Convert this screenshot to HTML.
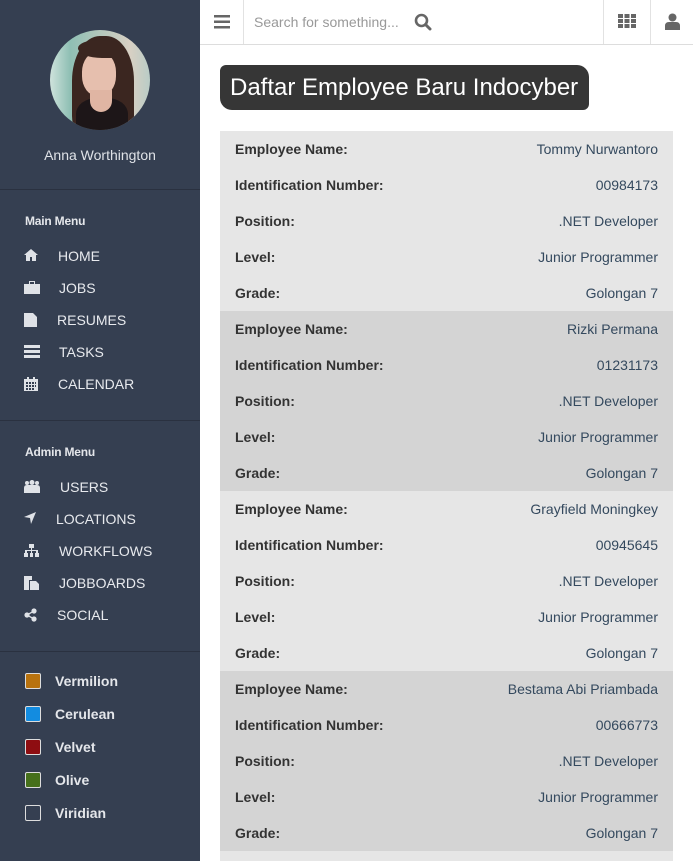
<!DOCTYPE html>
<html><head><meta charset="utf-8"><style>
*{margin:0;padding:0;box-sizing:border-box}
html{width:693px;height:861px;overflow:hidden}
body{width:693px;height:861px;overflow:hidden;font-family:"Liberation Sans",Arial,sans-serif;background:#fff;position:relative}
.sb{position:absolute;left:0;top:0;width:200px;height:861px;background:#353f51;color:#e4e6ea}
.av{position:absolute;left:50px;top:30px;width:100px;height:100px;border-radius:50%;overflow:hidden;background:linear-gradient(90deg,#cfe3dc 0%,#8fbfb4 20%,#d8d0c4 80%,#b9ccc6 100%)}
.name{position:absolute;top:147px;width:200px;text-align:center;font-size:14px;color:#dfe2e7}
.hr{position:absolute;left:0;width:200px;height:1px;background:#2a3140}
.sec{position:absolute;left:25px;font-size:12px;font-weight:bold;color:#e4e6ea;letter-spacing:-.2px}
.mi{position:absolute;left:24px;font-size:14px;color:#e8eaee;height:20px;line-height:20px}
.mi svg{position:absolute;left:0;top:3px;fill:#dfe2e7}
.mi span{position:absolute;white-space:nowrap}
.cl{position:absolute;left:25px;font-size:14px;font-weight:bold;color:#e4e6ea}
.cl i{position:absolute;left:0;top:0;width:16px;height:16px;border:1px solid #ddd;border-radius:2px}
.cl span{position:absolute;left:30px;top:0;white-space:nowrap}
.top{position:absolute;left:200px;top:0;width:493px;height:45px;border-bottom:1px solid #ddd;background:#fff}
.vl{position:absolute;top:0;width:1px;height:44px;background:#e2e2e2}
.title{position:absolute;left:220px;top:65px;width:369px;height:45px;background:#363636;color:#fff;font-size:24px;line-height:45px;padding-left:10px;border-radius:6px 12px 6px 12px;white-space:nowrap}
.blk{position:absolute;left:220px;width:453px;height:180px}
.row{height:36px;line-height:36px;font-size:14px;position:relative;padding:0 15px}
.row b{color:#333}
.row span{position:absolute;right:15px;top:0;color:#34495e}
</style></head><body>
<div class="sb">
 <div class="av">
  <div style="position:absolute;left:22px;top:6px;width:62px;height:100px;background:#3b2620;border-radius:45% 45% 20% 20%"></div>
  <div style="position:absolute;left:32px;top:22px;width:34px;height:44px;background:#e6bfae;border-radius:45%"></div>
  <div style="position:absolute;left:28px;top:10px;width:44px;height:18px;background:#3b2620;border-radius:50% 50% 20% 60%"></div>
  <div style="position:absolute;left:26px;top:68px;width:52px;height:40px;background:#1d1618;border-radius:40% 40% 0 0"></div>
  <div style="position:absolute;left:40px;top:60px;width:22px;height:22px;background:#e0b5a3;border-radius:0 0 50% 50%"></div>
 </div>
 <div class="name">Anna Worthington</div>
 <div class="hr" style="top:189px"></div>
 <div class="sec" style="top:214px">Main Menu</div>
 <div class="mi" style="top:246px"><svg width="14" height="12" viewBox="0 0 14 12"><path d="M7 0L0 6h2v6h4V8h2v4h4V6h2z"/></svg><span style="left:34px">HOME</span></div>
 <div class="mi" style="top:278px"><svg width="16" height="13" viewBox="0 0 16 13"><path d="M5 0h6v3h5v10H0V3h5zM6 1v2h4V1zM0 7h16v1H0z"/></svg><span style="left:35px">JOBS</span></div>
 <div class="mi" style="top:310px"><svg width="13" height="14" viewBox="0 0 13 14"><path d="M0 0h9l4 4v10H0zM3 7h7v1H3zm0 2h7v1H3zm0 2h7v1H3z"/></svg><span style="left:33px">RESUMES</span></div>
 <div class="mi" style="top:342px"><svg width="16" height="13" viewBox="0 0 16 13"><path d="M0 0h16v3H0zm0 5h16v3H0zm0 5h16v3H0z"/></svg><span style="left:35px">TASKS</span></div>
 <div class="mi" style="top:374px"><svg width="14" height="14" viewBox="0 0 14 14"><path d="M0 2h14v12H0zM3 0h2v3H3zm6 0h2v3H9zM2 5v2h2V5zm3 0v2h2V5zm3 0v2h2V5zm3 0v2h1V5zM2 8v2h2V8zm3 0v2h2V8zm3 0v2h2V8zm3 0v2h1V8zM2 11v2h2v-2zm3 0v2h2v-2zm3 0v2h2v-2z"/></svg><span style="left:34px">CALENDAR</span></div>
 <div class="hr" style="top:420px"></div>
 <div class="sec" style="top:445px">Admin Menu</div>
 <div class="mi" style="top:477px"><svg width="16" height="13" viewBox="0 0 16 13"><circle cx="3" cy="3" r="2"/><circle cx="8" cy="2.5" r="2.5"/><circle cx="13" cy="3" r="2"/><path d="M0 8q0-3 3-3 5 0 10 0 3 0 3 3v5H0z"/></svg><span style="left:36px">USERS</span></div>
 <div class="mi" style="top:509px"><svg width="12" height="12" viewBox="0 0 12 12"><path d="M12 0L0 5l6 1 1 6z"/></svg><span style="left:32px">LOCATIONS</span></div>
 <div class="mi" style="top:541px"><svg width="15" height="13" viewBox="0 0 15 13"><path d="M5 0h5v4H8v2h6v3h1v4h-4V9h1V7H8v2h1v4H6V9h1V7H3v2h1v4H0V9h1V6h6V4H5z"/></svg><span style="left:35px">WORKFLOWS</span></div>
 <div class="mi" style="top:573px"><svg width="15" height="14" viewBox="0 0 15 14"><path d="M0 0h8v4H5v10H0zM6 5h6l3 3v6H6z"/></svg><span style="left:35px">JOBBOARDS</span></div>
 <div class="mi" style="top:605px"><svg width="13" height="14" viewBox="0 0 13 14"><circle cx="3" cy="7" r="2.6"/><circle cx="10" cy="3" r="2.6"/><circle cx="10" cy="11" r="2.6"/><path d="M3 6.3L10 2.3v1.4L3 7.7zm0 1.4l7 4v-1.4l-7-4z"/></svg><span style="left:33px">SOCIAL</span></div>
 <div class="hr" style="top:651px"></div>
 <div class="cl" style="top:673px"><i style="background:#b8720e"></i><span>Vermilion</span></div>
 <div class="cl" style="top:706px"><i style="background:#138ce0"></i><span>Cerulean</span></div>
 <div class="cl" style="top:739px"><i style="background:#8e0d11"></i><span>Velvet</span></div>
 <div class="cl" style="top:772px"><i style="background:#46701b"></i><span>Olive</span></div>
 <div class="cl" style="top:805px"><i style="background:transparent"></i><span>Viridian</span></div>
</div>
<div class="top">
 <svg style="position:absolute;left:14px;top:15px" width="16" height="14" viewBox="0 0 16 14" fill="#666"><rect y="0" width="16" height="2.5"/><rect y="5.5" width="16" height="2.5"/><rect y="11" width="16" height="2.5"/></svg>
 <div class="vl" style="left:43px"></div>
 <div style="position:absolute;left:54px;top:14px;font-size:14px;color:#999">Search for something...</div>
 <svg style="position:absolute;left:214px;top:13px" width="18" height="18" viewBox="0 0 18 18"><circle cx="7.5" cy="7.5" r="5.5" fill="none" stroke="#666" stroke-width="2.6"/><path d="M11.5 11.5L16 16" stroke="#666" stroke-width="3" stroke-linecap="round"/></svg>
 <div class="vl" style="left:403px"></div>
 <svg style="position:absolute;left:418px;top:14px" width="18" height="14" viewBox="0 0 18 14" fill="#666"><rect x="0" y="0" width="5" height="4"/><rect x="6.5" y="0" width="5" height="4"/><rect x="13" y="0" width="5" height="4"/><rect x="0" y="5" width="5" height="4"/><rect x="6.5" y="5" width="5" height="4"/><rect x="13" y="5" width="5" height="4"/><rect x="0" y="10" width="5" height="4"/><rect x="6.5" y="10" width="5" height="4"/><rect x="13" y="10" width="5" height="4"/></svg>
 <div class="vl" style="left:450px"></div>
 <svg style="position:absolute;left:465px;top:13px" width="15" height="17" viewBox="0 0 15 17" fill="#666"><circle cx="7.5" cy="4.5" r="4"/><path d="M0 17v-4q0-4 4-4h7q4 0 4 4v4z"/></svg>
</div>
<div class="title">Daftar Employee Baru Indocyber</div>
<div class="blk" style="top:131px;background:#e6e6e6">
 <div class="row"><b>Employee Name:</b><span>Tommy Nurwantoro</span></div>
 <div class="row"><b>Identification Number:</b><span>00984173</span></div>
 <div class="row"><b>Position:</b><span>.NET Developer</span></div>
 <div class="row"><b>Level:</b><span>Junior Programmer</span></div>
 <div class="row"><b>Grade:</b><span>Golongan 7</span></div>
</div>
<div class="blk" style="top:311px;background:#d4d4d4">
 <div class="row"><b>Employee Name:</b><span>Rizki Permana</span></div>
 <div class="row"><b>Identification Number:</b><span>01231173</span></div>
 <div class="row"><b>Position:</b><span>.NET Developer</span></div>
 <div class="row"><b>Level:</b><span>Junior Programmer</span></div>
 <div class="row"><b>Grade:</b><span>Golongan 7</span></div>
</div>
<div class="blk" style="top:491px;background:#e6e6e6">
 <div class="row"><b>Employee Name:</b><span>Grayfield Moningkey</span></div>
 <div class="row"><b>Identification Number:</b><span>00945645</span></div>
 <div class="row"><b>Position:</b><span>.NET Developer</span></div>
 <div class="row"><b>Level:</b><span>Junior Programmer</span></div>
 <div class="row"><b>Grade:</b><span>Golongan 7</span></div>
</div>
<div class="blk" style="top:671px;background:#d4d4d4">
 <div class="row"><b>Employee Name:</b><span>Bestama Abi Priambada</span></div>
 <div class="row"><b>Identification Number:</b><span>00666773</span></div>
 <div class="row"><b>Position:</b><span>.NET Developer</span></div>
 <div class="row"><b>Level:</b><span>Junior Programmer</span></div>
 <div class="row"><b>Grade:</b><span>Golongan 7</span></div>
</div>
<div class="blk" style="top:851px;height:10px;background:#e6e6e6"></div>
</body></html>
